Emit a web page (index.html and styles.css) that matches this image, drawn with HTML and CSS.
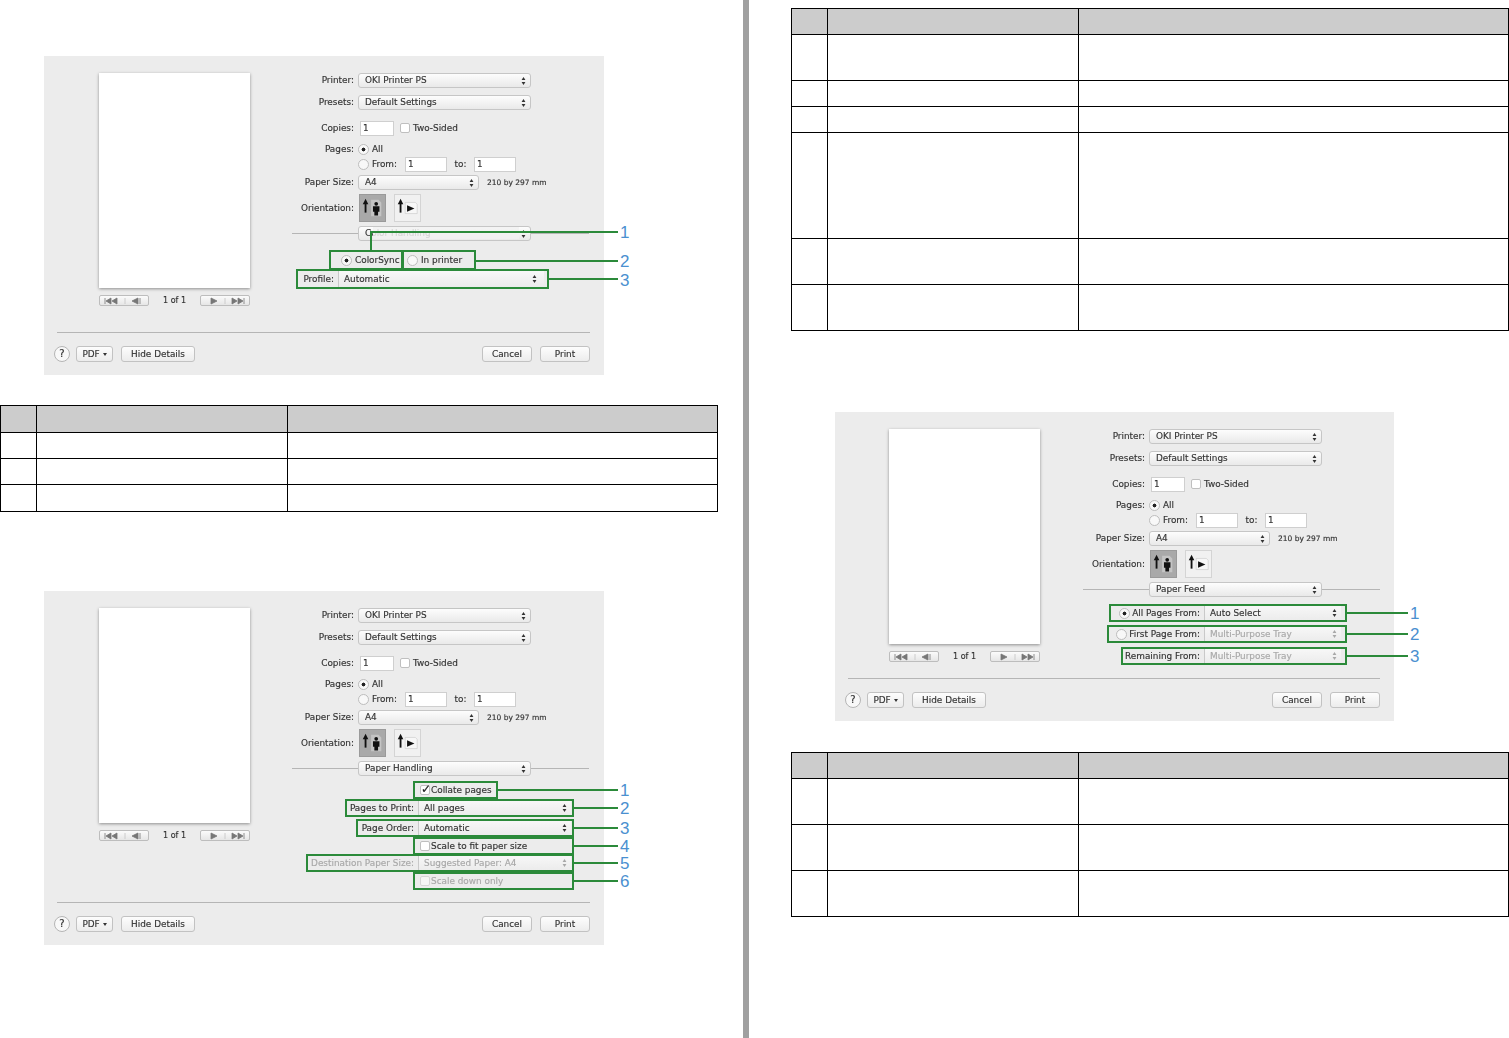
FILE: index.html
```html
<!DOCTYPE html>
<html lang="en">
<head>
    <meta charset="UTF-8">
    <title>Print dialog options</title>
    <link rel="stylesheet" href="styles.css">
</head>
<body>
    <svg class="icon-defs">
        <symbol id="updown" viewBox="0 0 6 10"><path d="M3 0 5.4 3.6H.6zM3 10 .6 6.4h4.8z"/></symbol>
        <symbol id="pager-back" viewBox="0 0 44 8"><path d="M3 1v6M9 1 4 4l5 3zM15 1l-5 3 5 3zM36 1l-6 3 6 3zM38 1v6" fill="#777" stroke="#777" stroke-width=".8"/><path d="M23 1v6" stroke="#ccc"/></symbol>
        <symbol id="pager-next" viewBox="0 0 44 8"><path d="M8 1l6 3-6 3zM29 1l5 3-5 3zM35 1l5 3-5 3zM41 1v6" fill="#777" stroke="#777" stroke-width=".8"/><path d="M22 1v6" stroke="#ccc"/></symbol>
        <symbol id="portrait" viewBox="0 0 27 28"><path d="M6 19V9" stroke="#111" stroke-width="2"/><path d="M6 4 9 10H3z" fill="#111"/><path d="M12 5h8l3 3v15H12z" fill="#c4c4c4"/><circle cx="17.500" cy="9.500" r="2" fill="#111"/><path d="M14 12h7v6h-1.500v4h-4v-4H14z" fill="#111"/></symbol>
        <symbol id="landscape" viewBox="0 0 27 28"><path d="M6 19V9" stroke="#111" stroke-width="2"/><path d="M6 4 9 10H3z" fill="#111"/><path d="M11 8h11l2 2v10H11z" fill="#f7f7f7" stroke="#ccc" stroke-width=".7"/><path d="M13 11 21 14.500 13 18z" fill="#111"/></symbol>
    </svg>

    <main class="sheet">
        <section class="col col-left">
            <!-- Color matching -->
            <div class="shot shot-first">
                <div class="dialog dialog-color">
                    <div class="dialog-main">
                        <div class="preview">
                            <div class="paper"></div>
                            <div class="pager">
                                <span class="pager-btn"><svg class="pager-icon"><use href="#pager-back"/></svg></span>
                                <span class="pager-text">1 of 1</span>
                                <span class="pager-btn"><svg class="pager-icon"><use href="#pager-next"/></svg></span>
                            </div>
                        </div>
                        <div class="form">
                            <div class="row row-printer"><label class="row-label">Printer:</label><div class="popup popup-wide">OKI Printer PS<svg class="updown"><use href="#updown"/></svg></div></div>
                            <div class="row row-presets"><label class="row-label">Presets:</label><div class="popup popup-wide">Default Settings<svg class="updown"><use href="#updown"/></svg></div></div>
                            <div class="row row-copies"><label class="row-label">Copies:</label><div class="inline"><span class="field field-copies">1</span><span class="checkbox checkbox-two"></span><span>Two-Sided</span></div></div>
                            <div class="row row-pages"><label class="row-label">Pages:</label><div class="inline"><span class="radio radio-on"></span><span>All</span></div></div>
                            <div class="row row-from"><span></span><div class="inline"><span class="radio"></span><span class="from-text">From:</span><span class="field field-page">1</span><span class="to-text">to:</span><span class="field field-page">1</span></div></div>
                            <div class="row row-size"><label class="row-label">Paper Size:</label><div class="inline"><div class="popup popup-size">A4<svg class="updown"><use href="#updown"/></svg></div><span class="size-text">210 by 297 mm</span></div></div>
                            <div class="row row-orient"><label class="row-label">Orientation:</label><div class="inline"><span class="orient orient-on"><svg class="orient-icon"><use href="#portrait"/></svg></span><span class="orient"><svg class="orient-icon"><use href="#landscape"/></svg></span></div></div>
                            <div class="panel-head"><span class="rule rule-left"></span><div class="popup popup-wide">Color Handling<svg class="updown"><use href="#updown"/></svg></div><span class="rule rule-right"></span></div>
                            <div class="panel panel-color">
                                <div class="radio-pair"><span class="radio radio-on"></span><span class="pair-text">ColorSync</span><span class="radio"></span><span>In printer</span></div>
                                <div class="combo combo-profile"><span class="combo-label">Profile:</span><span class="combo-value">Automatic<svg class="updown"><use href="#updown"/></svg></span></div>
                            </div>
                        </div>
                    </div>
                    <div class="dialog-foot">
                        <span class="help">?</span>
                        <span class="btn btn-pdf">PDF <i class="caret"></i></span>
                        <span class="btn btn-details">Hide Details</span>
                        <span class="btn btn-cancel">Cancel</span>
                        <span class="btn btn-print">Print</span>
                    </div>
                </div>
                <svg class="callouts" viewBox="0 0 590 319">
                    <rect class="mask" x="329" y="171" width="146" height="12"/>
                    <rect x="286" y="195" width="72" height="18"/>
                    <rect x="359" y="195" width="72" height="18"/>
                    <rect x="253" y="214" width="251" height="18"/>
                    <path d="M327 195V176H574M431 205H574M504 223H574"/>
                    <text x="576" y="182">1</text>
                    <text x="576" y="211">2</text>
                    <text x="576" y="230">3</text>
                </svg>
            </div>

            <table class="info info-a">
                <tr class="head"><th></th><th></th><th></th></tr>
                <tr class="h26"><td></td><td></td><td></td></tr>
                <tr class="h26"><td></td><td></td><td></td></tr>
                <tr class="h26"><td></td><td></td><td></td></tr>
            </table>

            <!-- Paper handling -->
            <div class="shot shot-second">
                <div class="dialog dialog-handling">
                    <div class="dialog-main">
                        <div class="preview">
                            <div class="paper"></div>
                            <div class="pager">
                                <span class="pager-btn"><svg class="pager-icon"><use href="#pager-back"/></svg></span>
                                <span class="pager-text">1 of 1</span>
                                <span class="pager-btn"><svg class="pager-icon"><use href="#pager-next"/></svg></span>
                            </div>
                        </div>
                        <div class="form">
                            <div class="row row-printer"><label class="row-label">Printer:</label><div class="popup popup-wide">OKI Printer PS<svg class="updown"><use href="#updown"/></svg></div></div>
                            <div class="row row-presets"><label class="row-label">Presets:</label><div class="popup popup-wide">Default Settings<svg class="updown"><use href="#updown"/></svg></div></div>
                            <div class="row row-copies"><label class="row-label">Copies:</label><div class="inline"><span class="field field-copies">1</span><span class="checkbox checkbox-two"></span><span>Two-Sided</span></div></div>
                            <div class="row row-pages"><label class="row-label">Pages:</label><div class="inline"><span class="radio radio-on"></span><span>All</span></div></div>
                            <div class="row row-from"><span></span><div class="inline"><span class="radio"></span><span class="from-text">From:</span><span class="field field-page">1</span><span class="to-text">to:</span><span class="field field-page">1</span></div></div>
                            <div class="row row-size"><label class="row-label">Paper Size:</label><div class="inline"><div class="popup popup-size">A4<svg class="updown"><use href="#updown"/></svg></div><span class="size-text">210 by 297 mm</span></div></div>
                            <div class="row row-orient"><label class="row-label">Orientation:</label><div class="inline"><span class="orient orient-on"><svg class="orient-icon"><use href="#portrait"/></svg></span><span class="orient"><svg class="orient-icon"><use href="#landscape"/></svg></span></div></div>
                            <div class="panel-head"><span class="rule rule-left"></span><div class="popup popup-wide">Paper Handling<svg class="updown"><use href="#updown"/></svg></div><span class="rule rule-right"></span></div>
                            <div class="panel panel-handling">
                                <div class="check-row"><span class="checkbox checkbox-on">&#10003;</span><span>Collate pages</span></div>
                                <div class="combo"><span class="combo-label">Pages to Print:</span><span class="combo-value">All pages<svg class="updown"><use href="#updown"/></svg></span></div>
                                <div class="combo"><span class="combo-label">Page Order:</span><span class="combo-value">Automatic<svg class="updown"><use href="#updown"/></svg></span></div>
                                <div class="check-row"><span class="checkbox"></span><span>Scale to fit paper size</span></div>
                                <div class="combo is-off"><span class="combo-label">Destination Paper Size:</span><span class="combo-value">Suggested Paper: A4<svg class="updown"><use href="#updown"/></svg></span></div>
                                <div class="check-row is-off"><span class="checkbox"></span><span>Scale down only</span></div>
                            </div>
                        </div>
                    </div>
                    <div class="dialog-foot">
                        <span class="help">?</span>
                        <span class="btn btn-pdf">PDF <i class="caret"></i></span>
                        <span class="btn btn-details">Hide Details</span>
                        <span class="btn btn-cancel">Cancel</span>
                        <span class="btn btn-print">Print</span>
                    </div>
                </div>
                <svg class="callouts" viewBox="0 0 590 354">
                    <rect x="370" y="191" width="83" height="16"/>
                    <rect x="302" y="209" width="227" height="16"/>
                    <rect x="313" y="229" width="216" height="16"/>
                    <rect x="370" y="247" width="159" height="16"/>
                    <rect x="263" y="264" width="266" height="16"/>
                    <rect x="370" y="282" width="159" height="16"/>
                    <path d="M453 199H574M529 217H574M529 237H574M529 255H574M529 272H574M529 290H574"/>
                    <text x="576" y="205">1</text>
                    <text x="576" y="223">2</text>
                    <text x="576" y="243">3</text>
                    <text x="576" y="261">4</text>
                    <text x="576" y="278">5</text>
                    <text x="576" y="296">6</text>
                </svg>
            </div>
        </section>

        <div class="gutter"></div>

        <section class="col col-right">
            <table class="info info-b">
                <tr class="head"><th></th><th></th><th></th></tr>
                <tr class="h46"><td></td><td></td><td></td></tr>
                <tr class="h26"><td></td><td></td><td></td></tr>
                <tr class="h26"><td></td><td></td><td></td></tr>
                <tr class="h106"><td></td><td></td><td></td></tr>
                <tr class="h46"><td></td><td></td><td></td></tr>
                <tr class="h46"><td></td><td></td><td></td></tr>
            </table>

            <!-- Paper feed -->
            <div class="shot shot-third">
                <div class="dialog dialog-feed">
                    <div class="dialog-main">
                        <div class="preview">
                            <div class="paper"></div>
                            <div class="pager">
                                <span class="pager-btn"><svg class="pager-icon"><use href="#pager-back"/></svg></span>
                                <span class="pager-text">1 of 1</span>
                                <span class="pager-btn"><svg class="pager-icon"><use href="#pager-next"/></svg></span>
                            </div>
                        </div>
                        <div class="form">
                            <div class="row row-printer"><label class="row-label">Printer:</label><div class="popup popup-wide">OKI Printer PS<svg class="updown"><use href="#updown"/></svg></div></div>
                            <div class="row row-presets"><label class="row-label">Presets:</label><div class="popup popup-wide">Default Settings<svg class="updown"><use href="#updown"/></svg></div></div>
                            <div class="row row-copies"><label class="row-label">Copies:</label><div class="inline"><span class="field field-copies">1</span><span class="checkbox checkbox-two"></span><span>Two-Sided</span></div></div>
                            <div class="row row-pages"><label class="row-label">Pages:</label><div class="inline"><span class="radio radio-on"></span><span>All</span></div></div>
                            <div class="row row-from"><span></span><div class="inline"><span class="radio"></span><span class="from-text">From:</span><span class="field field-page">1</span><span class="to-text">to:</span><span class="field field-page">1</span></div></div>
                            <div class="row row-size"><label class="row-label">Paper Size:</label><div class="inline"><div class="popup popup-size">A4<svg class="updown"><use href="#updown"/></svg></div><span class="size-text">210 by 297 mm</span></div></div>
                            <div class="row row-orient"><label class="row-label">Orientation:</label><div class="inline"><span class="orient orient-on"><svg class="orient-icon"><use href="#portrait"/></svg></span><span class="orient"><svg class="orient-icon"><use href="#landscape"/></svg></span></div></div>
                            <div class="panel-head"><span class="rule rule-left"></span><div class="popup popup-wide">Paper Feed<svg class="updown"><use href="#updown"/></svg></div><span class="rule rule-right"></span></div>
                            <div class="panel panel-feed">
                                <div class="combo"><span class="combo-label"><span class="radio radio-on"></span>All Pages From:</span><span class="combo-value">Auto Select<svg class="updown"><use href="#updown"/></svg></span></div>
                                <div class="combo is-dim"><span class="combo-label"><span class="radio"></span>First Page From:</span><span class="combo-value">Multi-Purpose Tray<svg class="updown"><use href="#updown"/></svg></span></div>
                                <div class="combo is-dim"><span class="combo-label">Remaining From:</span><span class="combo-value">Multi-Purpose Tray<svg class="updown"><use href="#updown"/></svg></span></div>
                            </div>
                        </div>
                    </div>
                    <div class="dialog-foot">
                        <span class="help">?</span>
                        <span class="btn btn-pdf">PDF <i class="caret"></i></span>
                        <span class="btn btn-details">Hide Details</span>
                        <span class="btn btn-cancel">Cancel</span>
                        <span class="btn btn-print">Print</span>
                    </div>
                </div>
                <svg class="callouts" viewBox="0 0 590 309">
                    <rect x="275" y="193" width="236" height="16"/>
                    <rect x="273" y="214" width="238" height="16"/>
                    <rect x="287" y="236" width="224" height="16"/>
                    <path d="M511 201H573M511 222H573M511 244H573"/>
                    <text x="575" y="207">1</text>
                    <text x="575" y="228">2</text>
                    <text x="575" y="250">3</text>
                </svg>
            </div>

            <table class="info info-c">
                <tr class="head"><th></th><th></th><th></th></tr>
                <tr class="h46"><td></td><td></td><td></td></tr>
                <tr class="h46"><td></td><td></td><td></td></tr>
                <tr class="h46"><td></td><td></td><td></td></tr>
            </table>
        </section>
    </main>
</body>
</html>
```

FILE: styles.css
```css
body {
    margin: 0;
    background-color: #ffffff;
    font-family: "DejaVu Sans", sans-serif;
    color: #333333;
}
.icon-defs {
    display: none;
}
.sheet {
    display: grid;
    grid-template-columns: 743px 6px 1fr;
    height: 1038px;
    overflow: hidden;
}
.gutter {
    background-color: #a0a0a0;
}
.col-left {
    padding-top: 56px;
}
.col-right {
    padding-top: 8px;
    padding-left: 42px;
}

/* tables */
.info {
    border-collapse: collapse;
    table-layout: fixed;
    width: 718px;
}
.info th,
.info td {
    border: 1px solid #000000;
    padding: 0;
}
.info th {
    background-color: #cccccc;
}
.info th:nth-child(1) {
    width: 35px;
}
.info th:nth-child(2) {
    width: 250px;
}
.head {
    height: 26px;
}
.h26 {
    height: 26px;
}
.h46 {
    height: 46px;
}
.h106 {
    height: 106px;
}
.info-a {
    margin-top: 30px;
    margin-bottom: 79px;
}
.info-a .head {
    height: 27px;
}
.info-a tr:last-child {
    height: 27px;
}
.info-c {
    margin-top: 31px;
}

/* screenshot + callouts */
.shot {
    position: relative;
    margin-left: 44px;
    width: 560px;
}
.shot-third {
    width: 559px;
    margin-top: 81px;
}
.callouts {
    position: absolute;
    top: 0;
    left: 0;
    width: 590px;
    overflow: visible;
    fill: none;
    stroke: #2b8a3a;
    stroke-width: 2;
}
.callouts text {
    fill: #4a90d0;
    stroke: none;
    font-family: "Liberation Sans", sans-serif;
    font-size: 17px;
}
.callouts .mask {
    fill: #f1f1f1;
    stroke: none;
    opacity: 0.85;
}

/* dialog */
.dialog {
    display: flex;
    flex-direction: column;
    justify-content: space-between;
    box-sizing: border-box;
    padding-top: 17px;
    background-color: #ececec;
    font-size: 8.9px;
    line-height: 15px;
    -webkit-text-stroke: 0.15px;
    filter: blur(0.6px);
}
.dialog-color {
    height: 319px;
}
.dialog-handling {
    height: 354px;
}
.dialog-feed {
    height: 309px;
}
.dialog-feed .preview {
    margin-left: 54px;
}
.dialog-feed .form {
    margin-left: 43px;
}
.dialog-main {
    display: flex;
}
.preview {
    width: 151px;
    margin-left: 55px;
}
.paper {
    height: 215px;
    background-color: #ffffff;
    box-shadow: 0 1px 3px rgba(0, 0, 0, 0.4);
}
.pager {
    display: flex;
    justify-content: space-between;
    align-items: center;
    margin-top: 7px;
    height: 11px;
}
.pager-btn {
    display: flex;
    align-items: center;
    justify-content: center;
    width: 48px;
    height: 9px;
    border: 1px solid #bdbdbd;
    border-radius: 2px;
    background: linear-gradient(#fbfbfb, #e6e6e6);
}
.pager-icon {
    width: 44px;
    height: 8px;
}
.pager-text {
    font-size: 8px;
}

/* form column */
.form {
    width: 297px;
    margin-left: 42px;
}
.row {
    display: grid;
    grid-template-columns: 62px 1fr;
    column-gap: 4px;
    align-items: center;
}
.row-label {
    text-align: right;
    white-space: nowrap;
    justify-self: end;
}
.inline {
    display: flex;
    align-items: center;
}
.row-printer {
    height: 15px;
}
.row-presets {
    height: 15px;
    margin-top: 7px;
}
.row-copies {
    height: 16px;
    margin-top: 10px;
}
.row-pages {
    height: 14px;
    margin-top: 6px;
}
.row-from {
    height: 15px;
    margin-top: 1px;
}
.row-size {
    height: 15px;
    margin-top: 3px;
}
.row-orient {
    height: 28px;
    margin-top: 4px;
}
.popup {
    position: relative;
    box-sizing: border-box;
    height: 15px;
    padding-left: 6px;
    border: 1px solid #c6c6c6;
    border-radius: 3px;
    background: linear-gradient(#fdfdfd, #e9e9e9);
    line-height: 13px;
}
.popup-wide {
    width: 173px;
}
.popup-size {
    width: 121px;
}
.updown {
    position: absolute;
    top: 50%;
    right: 4px;
    width: 5px;
    height: 8px;
    margin-top: -4px;
    fill: #333333;
}
.size-text {
    margin-left: 8px;
    font-size: 7.5px;
}
.field {
    box-sizing: border-box;
    height: 15px;
    padding-left: 2px;
    border: 1px solid #cfcfcf;
    background-color: #ffffff;
    line-height: 13px;
}
.field-copies {
    width: 34px;
    margin-left: 2px;
}
.field-page {
    width: 42px;
}
.checkbox {
    display: inline-block;
    box-sizing: border-box;
    width: 10px;
    height: 10px;
    border: 1px solid #bfbfbf;
    border-radius: 2px;
    background-color: #ffffff;
    flex: none;
}
.checkbox-two {
    margin: 0 3px 0 6px;
}
.checkbox-on {
    font-size: 12px;
    line-height: 6px;
    color: #222222;
}
.radio {
    display: inline-block;
    box-sizing: border-box;
    width: 11px;
    height: 11px;
    border: 1px solid #bdbdbd;
    border-radius: 50%;
    background-color: #f8f8f8;
    flex: none;
    margin-right: 3px;
}
.radio-on {
    background: radial-gradient(circle, #222222 0, #222222 1.7px, #f8f8f8 2.2px);
}
.from-text {
    width: 33px;
}
.to-text {
    width: 27px;
    text-align: center;
}
.orient {
    width: 27px;
    height: 28px;
    margin-left: 1px;
    margin-right: 7px;
    border: 1px solid #d4d4d4;
    box-sizing: border-box;
    background-color: #f1f1f1;
}
.orient-on {
    background-color: #a9a9a9;
    border-color: #9a9a9a;
}
.orient-icon {
    display: block;
    width: 25px;
    height: 26px;
}
.panel-head {
    display: flex;
    align-items: center;
    margin-top: 4px;
}
.rule {
    height: 1px;
    background-color: #b5b5b5;
}
.rule-left {
    width: 66px;
}
.rule-right {
    flex: 1;
}

/* panels under the popup */
.panel {
    display: flex;
    flex-direction: column;
}
.combo {
    display: grid;
    grid-template-columns: var(--label-w) var(--value-w);
    column-gap: 4px;
    height: 16px;
    line-height: 16px;
    white-space: nowrap;
}
.combo-label {
    display: flex;
    justify-content: flex-end;
    align-items: center;
}
.combo-value {
    position: relative;
    padding-left: 6px;
    background: linear-gradient(to right, #c9c9c9 0, #c9c9c9 1px, transparent 1px), linear-gradient(#f8f8f8, #ebebeb);
}
.combo-profile .updown {
    right: 7px;
}
.is-off,
.is-off .combo-value {
    color: #a8a8a8;
}
.is-off .updown,
.is-dim .updown {
    fill: #a8a8a8;
}
.is-dim .combo-value {
    color: #a8a8a8;
}
.check-row {
    display: flex;
    align-items: center;
    gap: 1px;
    height: 16px;
    padding-left: 128px;
}
.is-off .checkbox {
    opacity: 0.5;
}
.panel-color {
    --label-w: 42px;
    --value-w: 206px;
    margin-top: 11px;
    gap: 3px;
}
.radio-pair {
    display: flex;
    align-items: center;
    height: 16px;
    padding-left: 49px;
}
.pair-text {
    width: 52px;
}
.panel-handling {
    --label-w: 122px;
    --value-w: 153px;
    margin-top: 6px;
    gap: 2px;
}
.panel-handling .combo:nth-child(3) {
    margin-top: 2px;
}
.panel-handling .combo:nth-child(5) {
    margin-top: -1px;
}
.panel-feed {
    --label-w: 117px;
    --value-w: 137px;
    margin-top: 8px;
    gap: 5px;
}
.panel-feed .radio {
    margin-right: 2px;
}
.panel-feed .combo:nth-child(3) {
    margin-top: 1px;
}

/* footer */
.dialog-foot {
    position: relative;
    display: flex;
    align-items: center;
    gap: 6px;
    margin-bottom: 13px;
    padding: 14px 14px 0 10px;
}
.dialog-foot::before {
    content: "";
    position: absolute;
    top: 0;
    left: 13px;
    right: 14px;
    height: 1px;
    background-color: #b5b5b5;
}
.help {
    box-sizing: border-box;
    width: 16px;
    height: 16px;
    border: 1px solid #b5b5b5;
    border-radius: 50%;
    background-color: #f8f8f8;
    text-align: center;
    font-size: 10px;
    line-height: 14px;
}
.btn {
    box-sizing: border-box;
    height: 16px;
    border: 1px solid #c2c2c2;
    border-radius: 3px;
    background: linear-gradient(#fdfdfd, #ececec);
    text-align: center;
    line-height: 14px;
}
.btn-pdf {
    width: 37px;
}
.btn-details {
    width: 74px;
    margin-left: 2px;
}
.btn-cancel {
    width: 50px;
    margin-left: auto;
}
.btn-print {
    width: 50px;
    margin-left: 2px;
}
.caret {
    display: inline-block;
    margin-bottom: 1px;
    border-top: 3px solid #333333;
    border-left: 2px solid transparent;
    border-right: 2px solid transparent;
}
```
